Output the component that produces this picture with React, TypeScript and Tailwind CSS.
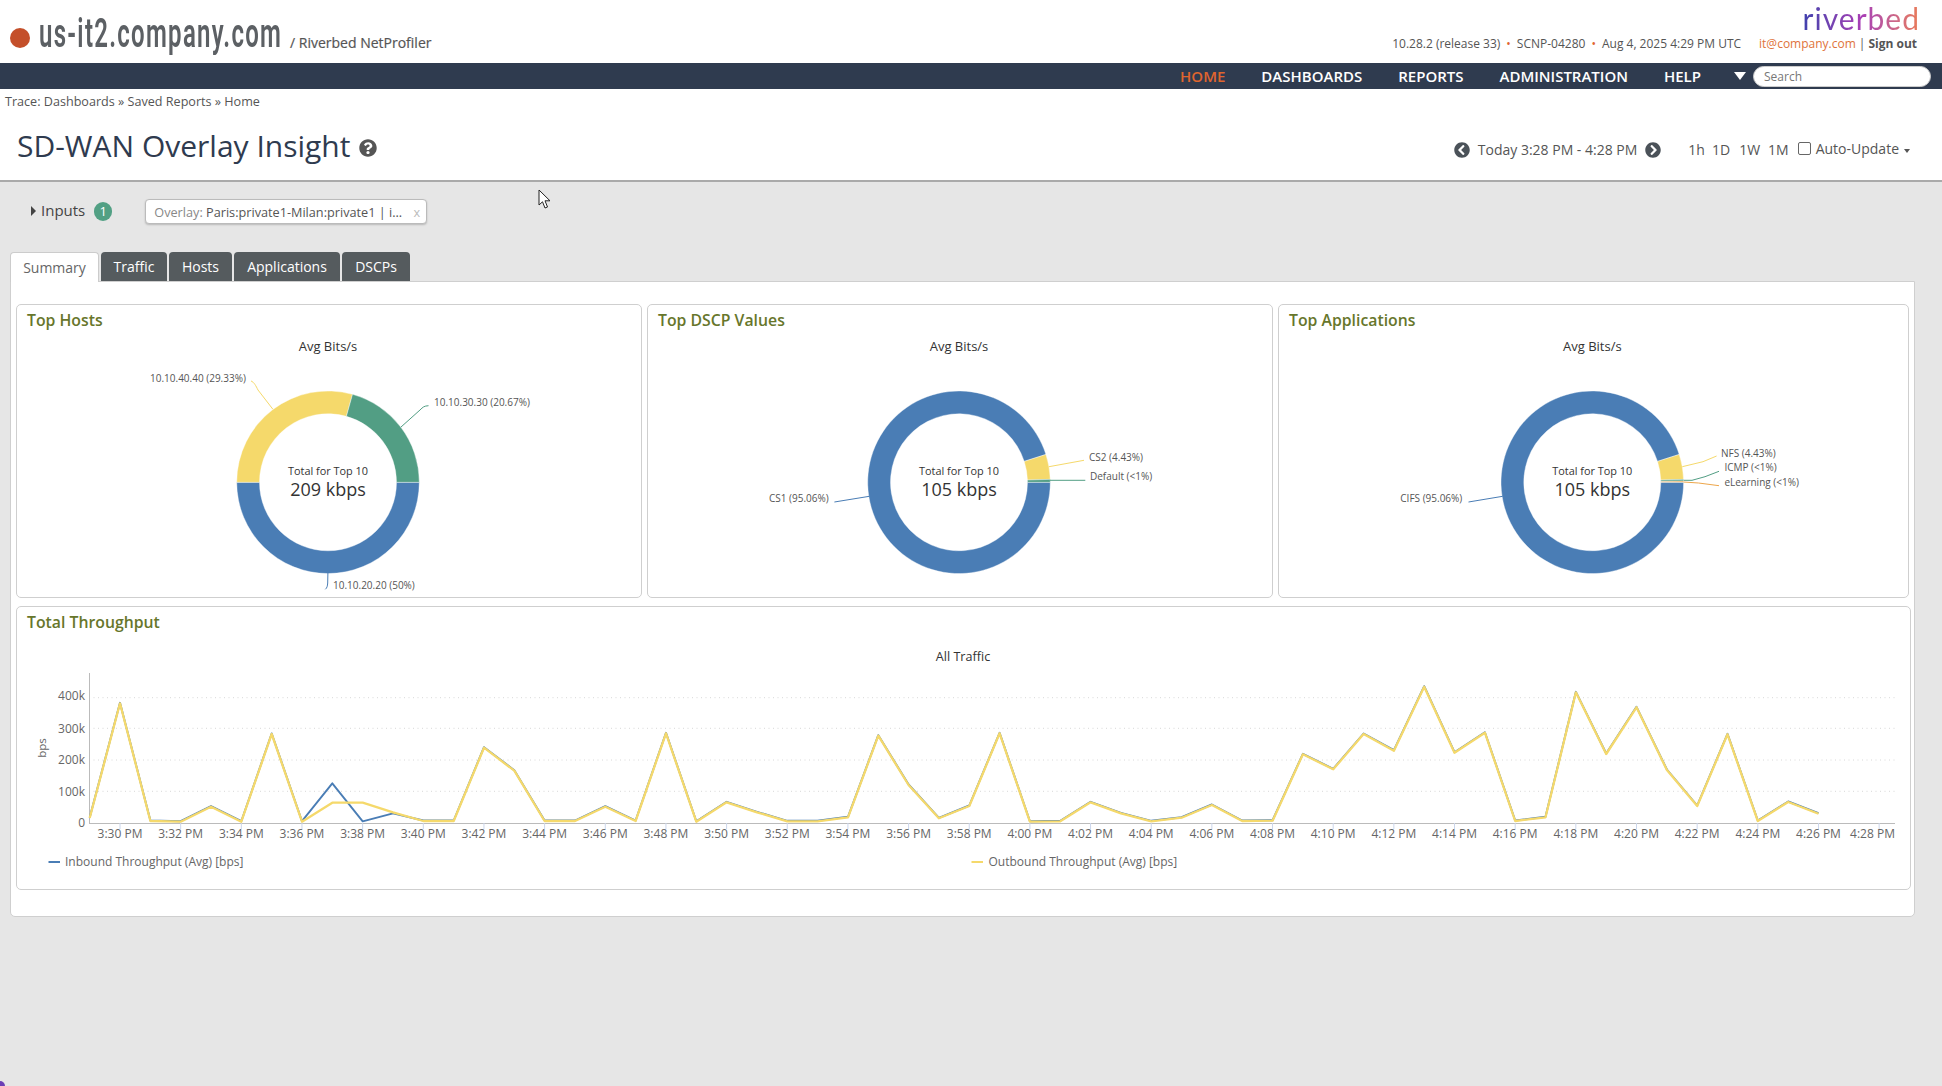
import React from "react";
import { FaQuestionCircle, FaChevronCircleLeft, FaChevronCircleRight } from "react-icons/fa";

const BLUE = "#4a7db5";
const YELLOW = "#f5d96b";
const GREEN = "#529e84";
const ORANGE = "#eda64a";

function arc(cx: number, cy: number, r0: number, r1: number, from: number, to: number) {
  const a0 = (from / 100) * 2 * Math.PI;
  const a1 = (to / 100) * 2 * Math.PI;
  const large = to - from > 50 ? 1 : 0;
  const p = (r: number, a: number) => `${(cx + r * Math.cos(a)).toFixed(2)} ${(cy + r * Math.sin(a)).toFixed(2)}`;
  return `M${p(r1, a0)}A${r1} ${r1} 0 ${large} 1 ${p(r1, a1)}L${p(r0, a1)}A${r0} ${r0} 0 ${large} 0 ${p(r0, a0)}Z`;
}

type Label = { t: string; x: number; y: number; line: string; color: string };

function Donut(props: {
  title: string;
  width: number;
  cx: number;
  originX: number;
  total: string;
  slices: [number, string][];
  labels: Label[];
}) {
  const { title, width, cx, originX, total, slices, labels } = props;
  let acc = 0;
  const cy = 482.3;
  return (
    <div className="h-[294px] rounded-[5px] border border-[#cfcfcf] bg-white" style={{ width }}>
      <div className="h-[30px] pl-[10px] pt-[4px] text-[15.8px] leading-[22px] font-semibold text-[#67762b]">{title}</div>
      <svg className="block" width={width - 2} height={261} viewBox={`${originX} 335 ${width - 2} 261`}>
        <text x={cx} y={351} textAnchor="middle" fontSize="13" fill="#333">Avg Bits/s</text>
        {slices.map(([v, c], i) => {
          const d = arc(cx, cy, 68.5, 91.3, acc, acc + v);
          acc += v;
          return <path key={i} d={d} fill={c} stroke="#fff" strokeWidth="0.4" />;
        })}
        <text x={cx} y={475} textAnchor="middle" fontSize="10.9" fill="#333">Total for Top 10</text>
        <text x={cx} y={496} textAnchor="middle" fontSize="18" fill="#333">{total}</text>
        {labels.map((l) => (
          <g key={l.t}>
            <path d={l.line} fill="none" stroke={l.color} strokeWidth="1" />
            <text x={l.x} y={l.y} fontSize="10" fill="#555">{l.t}</text>
          </g>
        ))}
      </svg>
    </div>
  );
}

const outbound = [
  818, 703.3, 821, 821.7, 806.7, 821.7, 734, 821.7, 802.7, 802.7, 812.3, 821, 821, 747.7, 770.7, 821, 821, 806.7, 821,
  733.3, 821.7, 802.3, 812.3, 821.3, 821.3, 817.3, 735.7, 785, 818.3, 806, 733.3, 821.7, 821.3, 802.3, 813.3, 821.3,
  817.7, 805, 821, 820.7, 754.3, 769.3, 734, 750.7, 686.7, 752.7, 732.7, 821, 817.3, 692.3, 754, 707.3, 770, 806,
  734.3, 821, 802, 813.7,
];
const inbound = outbound.map((y, i) => (i === 8 ? 783.3 : i === 9 ? 821.3 : i === 10 ? 813.3 : y - 0.5));
const X0 = 89.7;
const STEP = 30.33;
const pts = (a: number[]) => a.map((y, i) => `${(X0 + i * STEP).toFixed(1)},${y}`).join(" ");

const ticks = [
  "3:30 PM", "3:32 PM", "3:34 PM", "3:36 PM", "3:38 PM", "3:40 PM", "3:42 PM", "3:44 PM", "3:46 PM", "3:48 PM",
  "3:50 PM", "3:52 PM", "3:54 PM", "3:56 PM", "3:58 PM", "4:00 PM", "4:02 PM", "4:04 PM", "4:06 PM", "4:08 PM",
  "4:10 PM", "4:12 PM", "4:14 PM", "4:16 PM", "4:18 PM", "4:20 PM", "4:22 PM", "4:24 PM", "4:26 PM", "4:28 PM",
];
const yLabels: [string, number, number][] = [
  ["400k", 697.7, 700],
  ["300k", 728.3, 732.5],
  ["200k", 760, 764],
  ["100k", 791.3, 795.5],
  ["0", 823, 827],
];

function LineChart() {
  return (
    <svg className="block" width={1893} height={249} viewBox="17 639 1893 249">
      <text x={963} y={660.5} textAnchor="middle" fontSize="12.6" fill="#333">All Traffic</text>
      {yLabels.slice(0, 4).map(([, y]) => (
        <line key={y} x1={89} x2={1895} y1={y} y2={y} stroke="#d8d8d8" strokeWidth="1" strokeDasharray="1 3.5" />
      ))}
      <line x1={89.5} x2={89.5} y1={673} y2={823} stroke="#bbb" />
      <line x1={89} x2={1895} y1={823.5} y2={823.5} stroke="#bbb" />
      {yLabels.map(([t, , b]) => (
        <text key={t} x={85} y={b} textAnchor="end" fontSize="12" fill="#666">{t}</text>
      ))}
      <text transform="translate(46 748) rotate(-90)" textAnchor="middle" fontSize="11.5" fill="#666">bps</text>
      {ticks.map((t, i) => {
        const x = 120 + i * 60.66;
        return (
          <g key={t}>
            <line x1={x} x2={x} y1={823} y2={829} stroke="#ccd6eb" />
            <text x={i === 29 ? 1872.5 : x} y={838} textAnchor="middle" fontSize="12" fill="#666">{t}</text>
          </g>
        );
      })}
      <polyline points={pts(inbound)} fill="none" stroke={BLUE} strokeWidth="1.9" strokeLinejoin="round" />
      <polyline points={pts(outbound)} fill="none" stroke={YELLOW} strokeWidth="2.3" strokeLinejoin="round" />
      <line x1={48.5} x2={60} y1={862} y2={862} stroke={BLUE} strokeWidth="2" />
      <text x={65} y={866} fontSize="12" fill="#666">Inbound Throughput (Avg) [bps]</text>
      <line x1={971.5} x2={983} y1={862} y2={862} stroke={YELLOW} strokeWidth="2" />
      <text x={988.5} y={866} fontSize="12" fill="#666">Outbound Throughput (Avg) [bps]</text>
    </svg>
  );
}

export default function App() {
  return (
    <div className="relative h-[1086px] w-[1942px] overflow-hidden bg-[#e6e6e6] font-['Open_Sans',sans-serif] text-[#555]">
      {/* header */}
      <header className="flex h-[63px] justify-between bg-white">
        <div className="flex items-start">
          <span className="ml-[10px] mt-[28px] h-[20px] w-[20px] rounded-full bg-[#c44f2a]" />
          <span className="ml-[9px] mt-[9px] w-[251px] origin-left scale-x-[0.585] whitespace-nowrap font-['Roboto',sans-serif] text-[41px] leading-[48px] font-semibold tracking-[2.2px] text-[#5c6064]">
            us-it2.company.com
          </span>
          <span className="mt-[33px] whitespace-nowrap text-[14px] leading-[20px] text-[#555] [-webkit-text-stroke:0.2px]">
            / Riverbed NetProfiler
          </span>
        </div>
        <div className="flex flex-col items-end pr-[25px]">
          <div className="mr-[-3px] h-[36px] bg-gradient-to-r from-[#3f40ad] via-[#a83db5] to-[#ea7b55] bg-clip-text font-['Lato',sans-serif] text-[30px] leading-[36px] font-normal tracking-[1px] text-transparent">
            riverbed
          </div>
          <div className="mt-[-1px] flex items-center text-[12px] leading-[18px] whitespace-nowrap text-[#555]">
            <span>10.28.2 (release 33)</span>
            <span className="mx-[6px] text-[#e0652e]">•</span>
            <span>SCNP-04280</span>
            <span className="mx-[6px] text-[#e0652e]">•</span>
            <span>Aug 4, 2025 4:29 PM UTC</span>
            <span className="ml-[18px] text-[#e0733a]">it@company.com</span>
            <span className="mx-[3px]">|</span>
            <span className="font-bold">Sign out</span>
          </div>
        </div>
      </header>

      {/* nav */}
      <nav className="flex h-[26px] items-center justify-end bg-[#2f3b4f] pr-[11px] text-[15px] font-semibold text-white">
        <span className="text-[#e0652e]">HOME</span>
        <span className="ml-[36px]">DASHBOARDS</span>
        <span className="ml-[36px]">REPORTS</span>
        <span className="ml-[36px]">ADMINISTRATION</span>
        <span className="ml-[36px]">HELP</span>
        <span className="ml-[33px] h-0 w-0 border-x-[6.5px] border-t-[8px] border-x-transparent border-t-white" />
        <input
          readOnly
          placeholder="Search"
          className="ml-[7px] h-[21px] w-[178px] rounded-full border border-[#ccc] bg-white pl-[10px] text-[12px] font-normal outline-none placeholder:text-[#777]"
        />
      </nav>

      {/* breadcrumb and title */}
      <section className="h-[93px] border-b-2 border-[#aaa] bg-white">
        <div className="pl-[5px] pt-[4px] text-[12.6px] leading-[18px] text-[#555]">Trace: Dashboards » Saved Reports » Home</div>
        <div className="mt-[15px] flex h-[42px] items-center justify-between">
          <div className="mb-[2px] flex items-center pl-[17px]">
            <h1 className="text-[30px] leading-[40px] font-normal text-[#2f3b4f]">SD-WAN Overlay Insight</h1>
            <FaQuestionCircle className="ml-[9px] mt-[4px] text-[18px] text-[#555]" />
          </div>
          <div className="mt-[5px] flex items-center pr-[32px] text-[14px] text-[#555]">
            <FaChevronCircleLeft className="text-[16px] text-[#4b5259]" />
            <span className="ml-[8px]">Today 3:28 PM - 4:28 PM</span>
            <FaChevronCircleRight className="ml-[8px] text-[16px] text-[#4b5259]" />
            <span className="ml-[27px]">1h</span>
            <span className="ml-[7px]">1D</span>
            <span className="ml-[9px]">1W</span>
            <span className="ml-[8px]">1M</span>
            <span className="ml-[9px] mb-[2px] h-[13px] w-[13px] rounded-[2px] border border-[#666] bg-white" />
            <span className="ml-[5px] mb-[2px]">Auto-Update</span>
            <span className="ml-[5px] mt-[2px] h-0 w-0 border-x-[3.5px] border-t-[4px] border-x-transparent border-t-[#555]" />
          </div>
        </div>
      </section>

      {/* inputs */}
      <div className="flex h-[70px] items-start pt-[17px]">
        <span className="ml-[31px] mt-[7px] h-0 w-0 border-y-[5px] border-l-[5px] border-y-transparent border-l-[#444]" />
        <span className="ml-[5px] mt-[1px] text-[15px] leading-[20px] text-[#444]">Inputs</span>
        <span className="ml-[9px] mt-[3px] flex h-[19px] w-[18px] items-center justify-center rounded-full bg-[#52a084] text-[13px] text-white">1</span>
        <div className="ml-[33px] flex h-[25px] w-[282px] items-center justify-between rounded-[4px] border border-[#bbb] bg-white pl-[8px] pr-[6px] pt-[2px] text-[12.7px] whitespace-nowrap shadow-[0_1px_2px_rgba(0,0,0,0.2)]">
          <span>
            <span className="text-[#888]">Overlay: </span>Paris:private1-Milan:private1 | i...
          </span>
          <span className="text-[#bbb]">x</span>
        </div>
      </div>

      {/* tabs */}
      <div className="relative z-10 ml-[10px] flex h-[30px] gap-[2px] text-[14px] leading-[30px]">
        <div className="h-[30px] w-[89px] rounded-t-[4px] border border-b-0 border-[#ccc] bg-white text-center text-[#666]">Summary</div>
        <div className="h-[29px] w-[66px] rounded-t-[4px] bg-[#555b5e] text-center text-white">Traffic</div>
        <div className="h-[29px] w-[63px] rounded-t-[4px] bg-[#555b5e] text-center text-white">Hosts</div>
        <div className="h-[29px] w-[106px] rounded-t-[4px] bg-[#555b5e] text-center text-white">Applications</div>
        <div className="h-[29px] w-[68px] rounded-t-[4px] bg-[#555b5e] text-center text-white">DSCPs</div>
      </div>

      {/* content */}
      <main className="ml-[10px] mt-[-1px] h-[636px] w-[1905px] rounded-b-[5px] border border-[#cfcfcf] bg-white pl-[5px] pt-[22px]">
        <div className="flex gap-[5px]">
          <Donut
            title="Top Hosts"
            width={626}
            cx={328}
            originX={17}
            total="209 kbps"
            slices={[[50, BLUE], [29.33, YELLOW], [20.67, GREEN]]}
            labels={[
              { t: "10.10.40.40 (29.33%)", x: 150, y: 382, line: "M251 381C254 382 256 386 258 390L272.7 409", color: YELLOW },
              { t: "10.10.30.30 (20.67%)", x: 434, y: 406, line: "M428.5 405.7C424 406 423 407 420 410L401 427", color: GREEN },
              { t: "10.10.20.20 (50%)", x: 333, y: 589, line: "M325.3 589.3C327 588 327.5 586 327.7 583L327.9 573", color: BLUE },
            ]}
          />
          <Donut
            title="Top DSCP Values"
            width={626}
            cx={959}
            originX={648}
            total="105 kbps"
            slices={[[95.06, BLUE], [4.43, YELLOW], [0.51, GREEN]]}
            labels={[
              { t: "CS2 (4.43%)", x: 1089, y: 461, line: "M1084 460.3L1049 466.7", color: YELLOW },
              { t: "Default (<1%)", x: 1090, y: 480, line: "M1085.3 480.3L1050 480.3", color: GREEN },
              { t: "CS1 (95.06%)", x: 769, y: 502, line: "M834.4 502L869.4 496.3", color: BLUE },
            ]}
          />
          <Donut
            title="Top Applications"
            width={631}
            cx={1592.3}
            originX={1279}
            total="105 kbps"
            slices={[[95.06, BLUE], [4.43, YELLOW], [0.3, GREEN], [0.21, ORANGE]]}
            labels={[
              { t: "NFS (4.43%)", x: 1721, y: 457, line: "M1716.6 456L1703 461.7L1682.3 466.7", color: YELLOW },
              { t: "ICMP (<1%)", x: 1724.4, y: 471, line: "M1719 471.3L1705 476.7L1692 480.3H1683.6", color: GREEN },
              { t: "eLearning (<1%)", x: 1724.4, y: 485.5, line: "M1719 485.7L1698.6 483L1683.6 482", color: ORANGE },
              { t: "CIFS (95.06%)", x: 1400.3, y: 502, line: "M1468.5 502L1502.7 496.3", color: BLUE },
            ]}
          />
        </div>
        <div className="mt-[8px] h-[284px] w-[1895px] rounded-[5px] border border-[#cfcfcf] bg-white">
          <div className="h-[32px] pl-[10px] pt-[4px] text-[15.8px] leading-[22px] font-semibold text-[#67762b]">Total Throughput</div>
          <LineChart />
        </div>
      </main>

      {/* mouse pointer */}
      <svg className="absolute left-[538px] top-[189px]" width="14" height="21" viewBox="0 0 14 21">
        <path d="M1 1V16L4.5 12.8L7 19L9.5 18L7 11.8H12Z" fill="#fff" stroke="#222" strokeWidth="1" />
      </svg>
      <span className="absolute bottom-0 left-0 h-[5px] w-[5px] rounded-tr-[5px] bg-[#6b3fb5]" />
    </div>
  );
}
